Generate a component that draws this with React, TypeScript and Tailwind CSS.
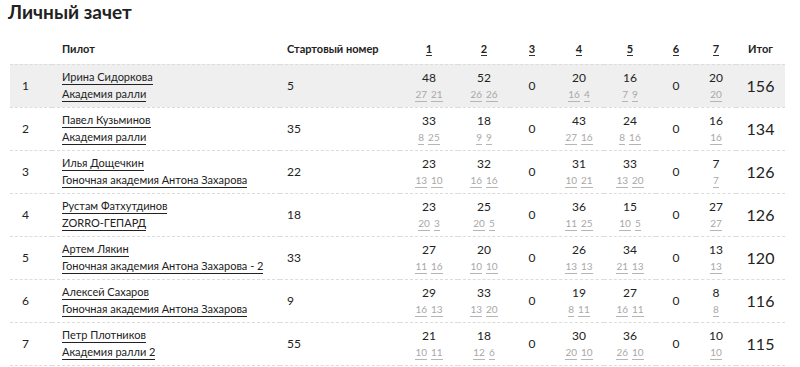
const rows = [
  { pos: 1, name: 'Ирина Сидоркова', team: 'Академия ралли', num: '5', stages: [[48, '27', '21'], [52, '26', '26'], [0], [20, '16', '4'], [16, '7', '9'], [0], [20, '20']], total: 156 },
  { pos: 2, name: 'Павел Кузьминов', team: 'Академия ралли', num: '35', stages: [[33, '8', '25'], [18, '9', '9'], [0], [43, '27', '16'], [24, '8', '16'], [0], [16, '16']], total: 134 },
  { pos: 3, name: 'Илья Дощечкин', team: 'Гоночная академия Антона Захарова', num: '22', stages: [[23, '13', '10'], [32, '16', '16'], [0], [31, '10', '21'], [33, '13', '20'], [0], [7, '7']], total: 126 },
  { pos: 4, name: 'Рустам Фатхутдинов', team: 'ZORRO-ГЕПАРД', num: '18', stages: [[23, '20', '3'], [25, '20', '5'], [0], [36, '11', '25'], [15, '10', '5'], [0], [27, '27']], total: 126 },
  { pos: 5, name: 'Артем Лякин', team: 'Гоночная академия Антона Захарова - 2', num: '33', stages: [[27, '11', '16'], [20, '10', '10'], [0], [26, '13', '13'], [34, '21', '13'], [0], [13, '13']], total: 120 },
  { pos: 6, name: 'Алексей Сахаров', team: 'Гоночная академия Антона Захарова', num: '9', stages: [[29, '16', '13'], [33, '13', '20'], [0], [19, '8', '11'], [27, '16', '11'], [0], [8, '8']], total: 116 },
  { pos: 7, name: 'Петр Плотников', team: 'Академия ралли 2', num: '55', stages: [[21, '10', '11'], [18, '12', '6'], [0], [30, '20', '10'], [36, '26', '10'], [0], [10, '10']], total: 115 },
]

const stageWidths = ['w-[58px]', 'w-[52px]', 'w-[44px]', 'w-[50px]', 'w-[52px]', 'w-[40px]', 'w-[40px]']

function StageCell({ stage }: { stage: (number | string)[] }) {
  const [score, ...parts] = stage
  if (parts.length === 0) {
    return <td className="text-center align-middle text-[12px] text-[#222]">{score}</td>
  }
  return (
    <td className="text-center align-middle">
      <div className="text-[12px] leading-[16px] text-[#222] pt-[1px]">{score}</div>
      <div className="flex justify-center gap-[4px] text-[10px] leading-[13px] mt-[2px] text-[#a8a8a8]">
        {parts.map((p, i) => (
          <span key={i} className="border-b border-[#b5b5b5]">{p}</span>
        ))}
      </div>
    </td>
  )
}

export default function App() {
  return (
    <div className="w-[800px] h-[367px] bg-white overflow-hidden px-[10px] font-['Lato','Open_Sans',sans-serif] text-[#222]">
      <h2 className="pt-[1px] -ml-[2px] text-[19px] leading-[22px] font-bold text-[#222]">Личный зачет</h2>
      <table className="mt-[12px] w-[775px] table-fixed border-collapse">
        <thead>
          <tr className="h-[29px] border-b border-dashed border-[#dcdcdc]">
            <th className="w-[42px]"></th>
            <th className="w-[228px] text-left pl-[10px] text-[11px] font-bold">Пилот</th>
            <th className="w-[120px] text-left pl-[7px] text-[11px] font-bold">Стартовый номер</th>
            {[1, 2, 3, 4, 5, 6, 7].map((n, i) => (
              <th key={n} className={`${stageWidths[i]} text-center text-[11px] font-bold`}>
                <span className="border-b border-[#333] leading-[13px] inline-block">{n}</span>
              </th>
            ))}
            <th className="text-center text-[11px] font-bold">Итог</th>
          </tr>
        </thead>
        <tbody>
          {rows.map((r) => (
            <tr key={r.pos} className={`h-[43px] border-b border-dashed border-[#dcdcdc] ${r.pos === 1 ? 'bg-[#efefef]' : ''}`}>
              <td className="pl-[12px] text-[12px] align-middle">{r.pos}</td>
              <td className="pl-[10px] align-middle">
                <div className="flex flex-col items-start gap-[2px] whitespace-nowrap">
                  <span className="text-[11px] leading-[14px] border-b border-[#222]">{r.name}</span>
                  <span className="text-[11px] leading-[14px] border-b border-[#222]">{r.team}</span>
                </div>
              </td>
              <td className="pl-[7px] text-[12px] align-middle">{r.num}</td>
              {r.stages.map((s, i) => (
                <StageCell key={i} stage={s} />
              ))}
              <td className="text-center text-[16px] align-middle">{r.total}</td>
            </tr>
          ))}
        </tbody>
      </table>
    </div>
  )
}
